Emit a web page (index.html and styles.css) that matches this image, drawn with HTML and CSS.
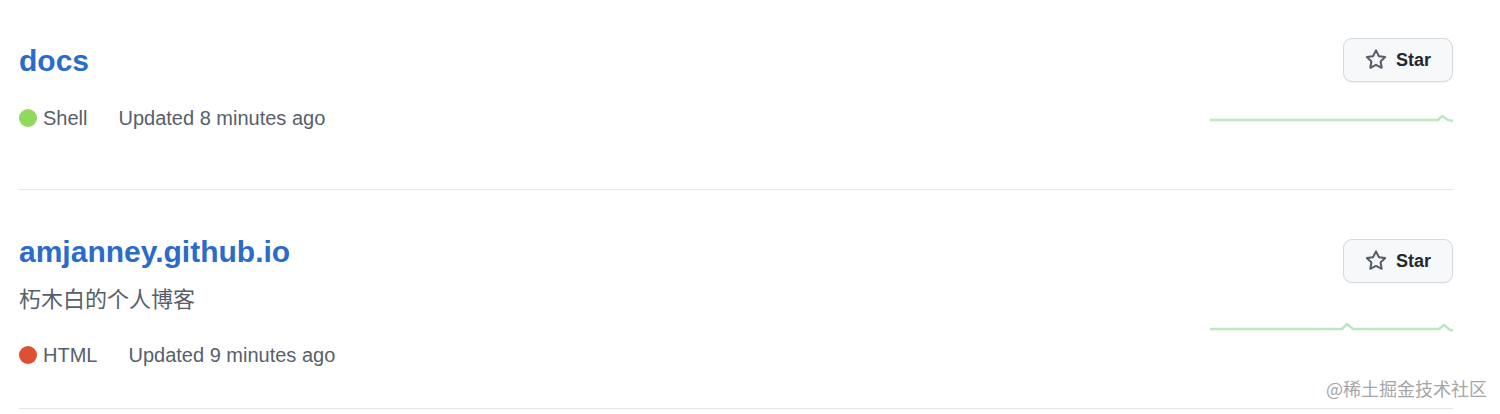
FILE: index.html
```html
<!DOCTYPE html>
<html lang="en">
<head>
<meta charset="utf-8">
<title>Repositories</title>
<link rel="stylesheet" href="styles.css">
</head>
<body>
<ul class="repo-list">
  <li class="repo">
    <div class="repo-info">
      <h3 class="repo-title"><a href="#">docs</a></h3>
      <div class="repo-meta">
        <span class="lang"><span class="lang-dot dot-shell"></span>Shell</span>
        <span class="updated">Updated 8 minutes ago</span>
      </div>
    </div>
    <div class="repo-actions">
      <button class="star-btn" type="button">
        <svg class="star-icon" viewBox="0 0 16 16" width="22" height="22" aria-hidden="true"><path fill="currentColor" d="M8 .25a.75.75 0 01.673.418l1.882 3.815 4.21.612a.75.75 0 01.416 1.279l-3.046 2.970.719 4.192a.75.75 0 01-1.088.791L8 12.347l-3.766 1.980a.75.75 0 01-1.088-.790l.720-4.194L.818 6.374a.75.75 0 01.416-1.280l4.210-.611L7.327.668A.75.75 0 018 .25zm0 2.445L6.615 5.5a.75.75 0 01-.564.41l-3.097.45 2.240 2.184a.75.75 0 01.216.664l-.528 3.084 2.769-1.456a.75.75 0 01.698 0l2.770 1.456-.530-3.084a.75.75 0 01.216-.664l2.240-2.183-3.096-.45a.75.75 0 01-.564-.41L8 2.694v.001z"/></svg>
        <span>Star</span>
      </button>
      <svg class="spark" width="243" height="30" viewBox="0 0 243 30" aria-hidden="true"><polyline points="0,15 228,15 232,11 238,15 243,16" /></svg>
    </div>
  </li>
  <li class="repo">
    <div class="repo-info">
      <h3 class="repo-title"><a href="#">amjanney.github.io</a></h3>
      <p class="repo-desc">朽木白的个人博客</p>
      <div class="repo-meta">
        <span class="lang"><span class="lang-dot dot-html"></span>HTML</span>
        <span class="updated">Updated 9 minutes ago</span>
      </div>
    </div>
    <div class="repo-actions repo-actions--inset">
      <button class="star-btn" type="button">
        <svg class="star-icon" viewBox="0 0 16 16" width="22" height="22" aria-hidden="true"><path fill="currentColor" d="M8 .25a.75.75 0 01.673.418l1.882 3.815 4.21.612a.75.75 0 01.416 1.279l-3.046 2.970.719 4.192a.75.75 0 01-1.088.791L8 12.347l-3.766 1.980a.75.75 0 01-1.088-.790l.720-4.194L.818 6.374a.75.75 0 01.416-1.280l4.210-.611L7.327.668A.75.75 0 018 .25zm0 2.445L6.615 5.5a.75.75 0 01-.564.41l-3.097.45 2.240 2.184a.75.75 0 01.216.664l-.528 3.084 2.769-1.456a.75.75 0 01.698 0l2.770 1.456-.530-3.084a.75.75 0 01.216-.664l2.240-2.183-3.096-.45a.75.75 0 01-.564-.41L8 2.694v.001z"/></svg>
        <span>Star</span>
      </button>
      <svg class="spark" width="243" height="30" viewBox="0 0 243 30" aria-hidden="true"><polyline points="0,15 132,15 137,10 143,15 229,15 234,11 240,16 243,16" /></svg>
    </div>
  </li>
</ul>
<div class="watermark">@稀土掘金技术社区</div>
</body>
</html>
```

FILE: styles.css
```css
html, body {
  margin: 0;
  padding: 0;
  background: #ffffff;
}

body {
  font-family: "Liberation Sans", "Noto Sans CJK SC", sans-serif;
  color: #57606a;
  position: relative;
  width: 1500px;
  height: 414px;
  overflow: hidden;
}

.repo-list {
  list-style: none;
  margin: 0;
  padding: 0 47px 0 19px;
}

.repo {
  display: flex;
  justify-content: space-between;
  padding: 38px 0;
  border-bottom: 1px solid #e4e6e9;
}

.repo + .repo {
  padding-top: 39px;
}

.repo-info {
  display: flex;
  flex-direction: column;
}

.repo-title {
  margin: 0;
  font-size: 30px;
  line-height: 45px;
  font-weight: 700;
}

.repo-title a {
  color: #2b6bcb;
  text-decoration: none;
}

.repo-desc {
  margin: 9px 0 4px;
  font-size: 22px;
  line-height: 33px;
  color: #57606a;
}

.repo-meta {
  display: flex;
  align-items: center;
  margin-top: 20px;
  font-size: 20px;
  line-height: 30px;
  color: #57606a;
}

.lang {
  display: flex;
  align-items: center;
  margin-right: 31px;
}

.lang-dot {
  width: 18px;
  height: 18px;
  border-radius: 50%;
  margin-right: 6px;
}

.dot-shell { background: #8fd95c; }
.dot-html { background: #dc5132; }

.repo-actions {
  display: flex;
  flex-direction: column;
  align-items: flex-end;
  justify-content: space-between;
}

.repo-actions--inset {
  padding: 10px 0;
}

.star-btn {
  display: flex;
  align-items: center;
  gap: 9px;
  width: 110px;
  height: 44px;
  box-sizing: border-box;
  padding: 0 0 0 21px;
  border: 1px solid #d5d8dc;
  border-radius: 9px;
  background: #f6f8fa;
  font-family: "Liberation Sans", sans-serif;
  font-size: 18px;
  font-weight: 700;
  color: #24292f;
  box-shadow: 0 1px 0 rgba(27, 31, 36, 0.04);
}

.star-icon {
  color: #57606a;
  flex: none;
}

.spark {
  display: block;
  margin-top: 23px;
  margin-bottom: 16px;
}

.spark polyline {
  fill: none;
  stroke: #bde7c1;
  stroke-width: 2.5;
  stroke-linejoin: round;
}

.watermark {
  position: absolute;
  left: 1326px;
  top: 376px;
  font-family: "Noto Sans CJK SC", sans-serif;
  font-size: 18px;
  line-height: 24px;
  color: #a6a6a6;
  white-space: nowrap;
}
```
